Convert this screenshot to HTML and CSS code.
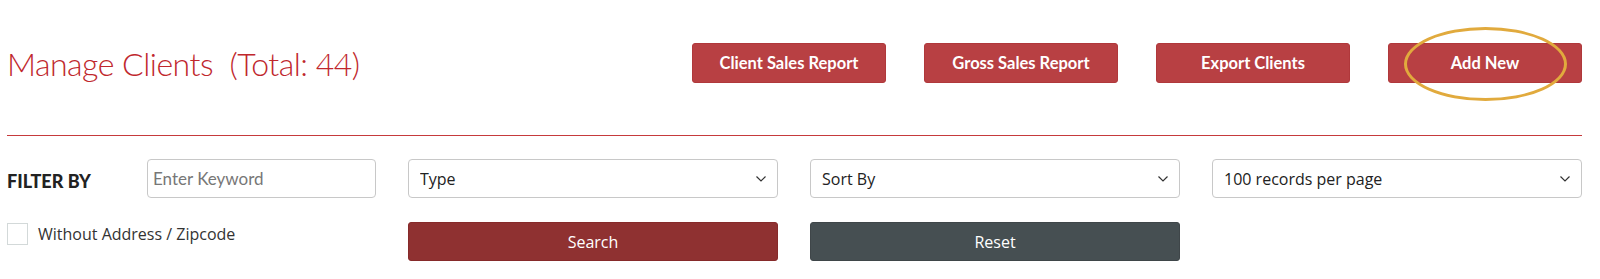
FILE: index.html
```html
<!DOCTYPE html>
<html lang="en">
<head>
<meta charset="utf-8">
<title>Manage Clients</title>
<link rel="stylesheet" href="styles.css">
</head>
<body>
<div class="page">
  <header class="header">
    <h1 class="title">Manage Clients&nbsp; (Total: 44)</h1>
    <div class="actions">
      <button class="btn btn-red">Client Sales Report</button>
      <button class="btn btn-red">Gross Sales Report</button>
      <button class="btn btn-red">Export Clients</button>
      <button class="btn btn-red btn-highlight">Add New<span class="oval"></span></button>
    </div>
  </header>
  <div class="divider"></div>
  <form class="filters">
    <div class="filter-label">FILTER BY</div>
    <input class="keyword" type="text" placeholder="Enter Keyword">
    <div class="select-wrap">
      <select class="select"><option>Type</option></select>
      <svg class="chev" viewBox="0 0 10 6" width="10" height="6"><path d="M0.5 0.5 L5 5 L9.5 0.5" fill="none" stroke="#333" stroke-width="1.2"/></svg>
    </div>
    <div class="select-wrap">
      <select class="select"><option>Sort By</option></select>
      <svg class="chev" viewBox="0 0 10 6" width="10" height="6"><path d="M0.5 0.5 L5 5 L9.5 0.5" fill="none" stroke="#333" stroke-width="1.2"/></svg>
    </div>
    <div class="select-wrap">
      <select class="select"><option>100 records per page</option></select>
      <svg class="chev" viewBox="0 0 10 6" width="10" height="6"><path d="M0.5 0.5 L5 5 L9.5 0.5" fill="none" stroke="#333" stroke-width="1.2"/></svg>
    </div>
    <label class="check">
      <span class="box"></span>
      <span class="check-text">Without Address / Zipcode</span>
    </label>
    <button type="button" class="btn btn-search">Search</button>
    <button type="button" class="btn btn-reset">Reset</button>
  </form>
</div>
</body>
</html>
```

FILE: styles.css
```css
* { box-sizing: border-box; }
html, body { margin: 0; padding: 0; background: #fff; }
body { font-family: "Lato", "Open Sans", sans-serif; color: #222; }

.page { padding: 43px 18px 0 7px; }

.header {
  display: flex;
  align-items: center;
  justify-content: space-between;
  height: 40px;
}
.title {
  margin: 0;
  font-weight: 300;
  font-size: 32px;
  line-height: 40px;
  color: #c0272d;
  letter-spacing: -0.5px;
  padding-top: 2px;
}
.actions { display: flex; gap: 38px; }

.btn {
  border: none;
  border-radius: 3px;
  font-family: "Lato", "Open Sans", sans-serif;
  font-weight: 700;
  font-size: 16.5px;
  color: #fff;
  cursor: pointer;
}
.btn-red {
  width: 194px;
  height: 40px;
  background: #b84043;
  border: 1px solid #b0383b;
}
.btn-highlight { position: relative; }
.oval {
  position: absolute;
  left: 15px;
  top: -17px;
  width: 163px;
  height: 74px;
  border: 3px solid #e1aa3d;
  border-radius: 50%;
  pointer-events: none;
}

.divider { height: 1px; background: #c63a3c; margin-top: 52px; }

.filters {
  display: grid;
  grid-template-columns: 108px 229px 370px 370px 370px;
  grid-template-rows: 39px 39px;
  column-gap: 32px;
  row-gap: 24px;
  margin-top: 23px;
}
.filter-label {
  align-self: center;
  font-weight: 900;
  font-size: 18px;
  color: #222;
  padding-top: 4px;
}
.keyword {
  height: 39px;
  border: 1px solid #c8c8c8;
  border-radius: 4px;
  padding: 0 5px;
  font-family: "Lato", "Open Sans", sans-serif;
  font-size: 17px;
  color: #333;
  outline: none;
}
.keyword::placeholder { color: #777; }

.select-wrap { position: relative; }
.select {
  -webkit-appearance: none;
  appearance: none;
  width: 100%;
  height: 39px;
  border: 1px solid #c8c8c8;
  border-radius: 4px;
  background: #fff;
  padding: 0 30px 0 11px;
  font-family: "Open Sans", sans-serif;
  font-size: 16px;
  color: #222;
}
.chev { position: absolute; right: 12px; top: 17px; pointer-events: none; }

.check {
  grid-column: 1 / 3;
  display: flex;
  align-items: flex-start;
  gap: 10px;
  padding-top: 1px;
}
.box {
  width: 21px;
  height: 22px;
  border: 1px solid #d3d9d9;
  background: #fff;
  flex: none;
}
.check-text {
  font-family: "Open Sans", sans-serif;
  font-size: 16px;
  color: #333;
  line-height: 22px;
}

.btn-search {
  grid-column: 3;
  height: 39px;
  background: #8f3131;
  border: 1px solid #862a2a;
  font-weight: 400;
  font-family: "Open Sans", sans-serif;
  font-size: 16px;
}
.btn-reset {
  grid-column: 4;
  height: 39px;
  background: #464f52;
  border: 1px solid #3f4649;
  font-weight: 400;
  font-family: "Open Sans", sans-serif;
  font-size: 16px;
}
```
